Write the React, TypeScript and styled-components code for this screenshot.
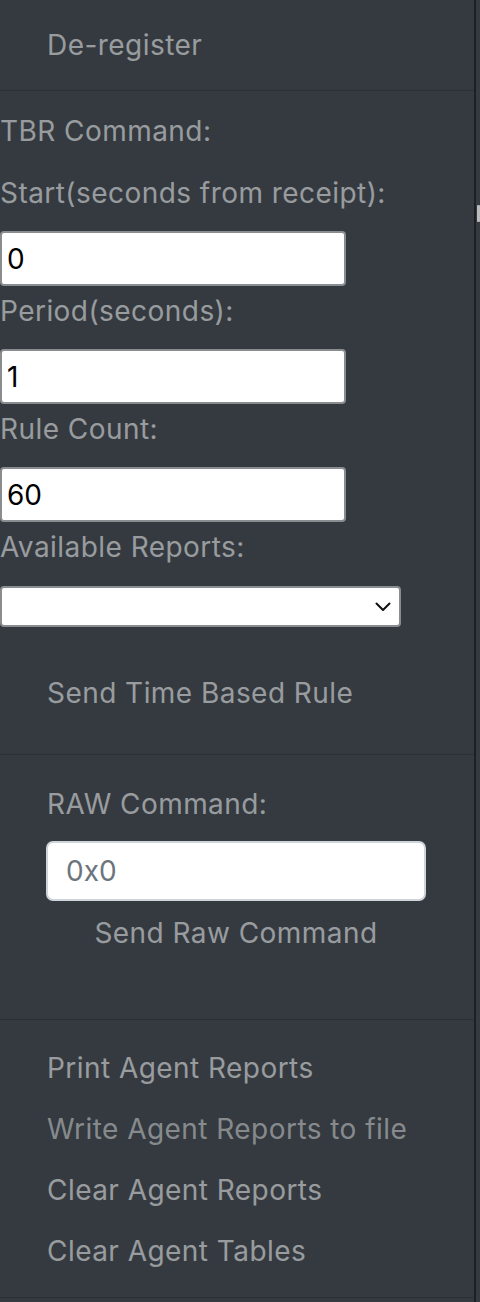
import React from "react";
import styled, { createGlobalStyle } from "styled-components";

const GlobalStyle = createGlobalStyle`
  html, body {
    margin: 0;
    padding: 0;
    background: #343a40;
  }
  body {
    font-family: Inter, "Noto Sans", "Liberation Sans", sans-serif;
  }
`;

const Page = styled.div`
  display: flex;
  width: 480px;
  height: 1302px;
  overflow: hidden;
  background: #343a40;
`;

const Sidebar = styled.nav`
  width: 474px;
  flex-shrink: 0;
  border-right: 2px solid #1c1f23;
  display: flex;
  flex-direction: column;
`;

const Gutter = styled.div`
  flex: 1;
  display: flex;
  justify-content: flex-end;
`;

const Thumb = styled.div`
  margin-top: 205px;
  width: 3px;
  height: 17px;
  background: #b9bbbd;
  border-radius: 1px;
`;

const Section = styled.div<{ $pt?: number; $pb?: number }>`
  display: flex;
  flex-direction: column;
  padding-top: ${({ $pt }) => $pt ?? 0}px;
  padding-bottom: ${({ $pb }) => $pb ?? 0}px;
  border-bottom: 1px solid #2b3035;
`;

const NavLink = styled.a<{ $dim?: boolean; $pad?: number }>`
  display: block;
  padding: ${({ $pad }) => $pad ?? 0}px 47px;
  font-size: 28px;
  line-height: 42px;
  letter-spacing: 0.45px;
  color: ${({ $dim }) => ($dim ? "rgba(255,255,255,0.42)" : "rgba(255,255,255,0.5)")};
  text-decoration: none;
  cursor: pointer;
`;

const NavList = styled.div`
  display: flex;
  flex-direction: column;
  gap: 19px;
`;

const Label = styled.label<{ $mb?: number; $inset?: boolean }>`
  display: block;
  font-size: 28px;
  line-height: 42px;
  letter-spacing: 0.45px;
  color: rgba(255, 255, 255, 0.5);
  margin-bottom: ${({ $mb }) => $mb ?? 17}px;
  padding-left: ${({ $inset }) => ($inset ? 47 : 0)}px;
`;

const NumberInput = styled.input`
  box-sizing: border-box;
  width: 346px;
  height: 55px;
  margin: 0 0 4px 0;
  padding: 0 5px;
  border: 2px solid #8a8d90;
  border-radius: 4px;
  background: #fff;
  color: #000;
  font-family: Inter, "Liberation Sans", sans-serif;
  font-size: 28px;
  outline: none;
`;

const SelectBox = styled.div`
  box-sizing: border-box;
  width: 401px;
  height: 41px;
  margin-bottom: 21px;
  border: 2px solid #8a8d90;
  border-radius: 4px;
  background: #fff;
  display: flex;
  align-items: center;
  justify-content: flex-end;
  padding-right: 8px;
`;

const RawInput = styled.input`
  box-sizing: border-box;
  width: 380px;
  height: 60px;
  margin-left: 46px;
  padding: 0 18px;
  border: 2px solid #ced4da;
  border-radius: 7px;
  background: #fff;
  color: #495057;
  font-family: Inter, "Liberation Sans", sans-serif;
  font-size: 28px;
  outline: none;
  &::placeholder {
    color: #6c757d;
  }
`;

const CenterLink = styled.a`
  display: block;
  width: 380px;
  margin: 11px 0 0 46px;
  text-align: center;
  font-size: 28px;
  line-height: 42px;
  letter-spacing: 0.45px;
  color: rgba(255, 255, 255, 0.5);
  cursor: pointer;
`;

const Chevron = () => (
  <svg width="16" height="10" viewBox="0 0 16 10" fill="none">
    <path d="M1.5 1.5 L8 8 L14.5 1.5" stroke="#111" strokeWidth="2" strokeLinecap="round" strokeLinejoin="round" />
  </svg>
);

export default function App() {
  return (
    <Page>
      <GlobalStyle />
      <Sidebar>
        <Section $pt={24} $pb={24}>
          <NavLink>De-register</NavLink>
        </Section>

        <Section $pt={19} $pb={16}>
          <Label $mb={20}>TBR Command:</Label>
          <Label>Start(seconds from receipt):</Label>
          <NumberInput defaultValue="0" />
          <Label>Period(seconds):</Label>
          <NumberInput defaultValue="1" />
          <Label>Rule Count:</Label>
          <NumberInput defaultValue="60" />
          <Label $mb={18}>Available Reports:</Label>
          <SelectBox>
            <Chevron />
          </SelectBox>
          <NavLink $pad={24}>Send Time Based Rule</NavLink>
        </Section>

        <Section $pt={28} $pb={65}>
          <Label $inset $mb={16}>RAW Command:</Label>
          <RawInput placeholder="0x0" />
          <CenterLink>Send Raw Command</CenterLink>
        </Section>

        <Section $pt={27} $pb={25}>
          <NavList>
            <NavLink>Print Agent Reports</NavLink>
            <NavLink $dim>Write Agent Reports to file</NavLink>
            <NavLink>Clear Agent Reports</NavLink>
            <NavLink>Clear Agent Tables</NavLink>
          </NavList>
        </Section>
      </Sidebar>
      <Gutter>
        <Thumb />
      </Gutter>
    </Page>
  );
}
